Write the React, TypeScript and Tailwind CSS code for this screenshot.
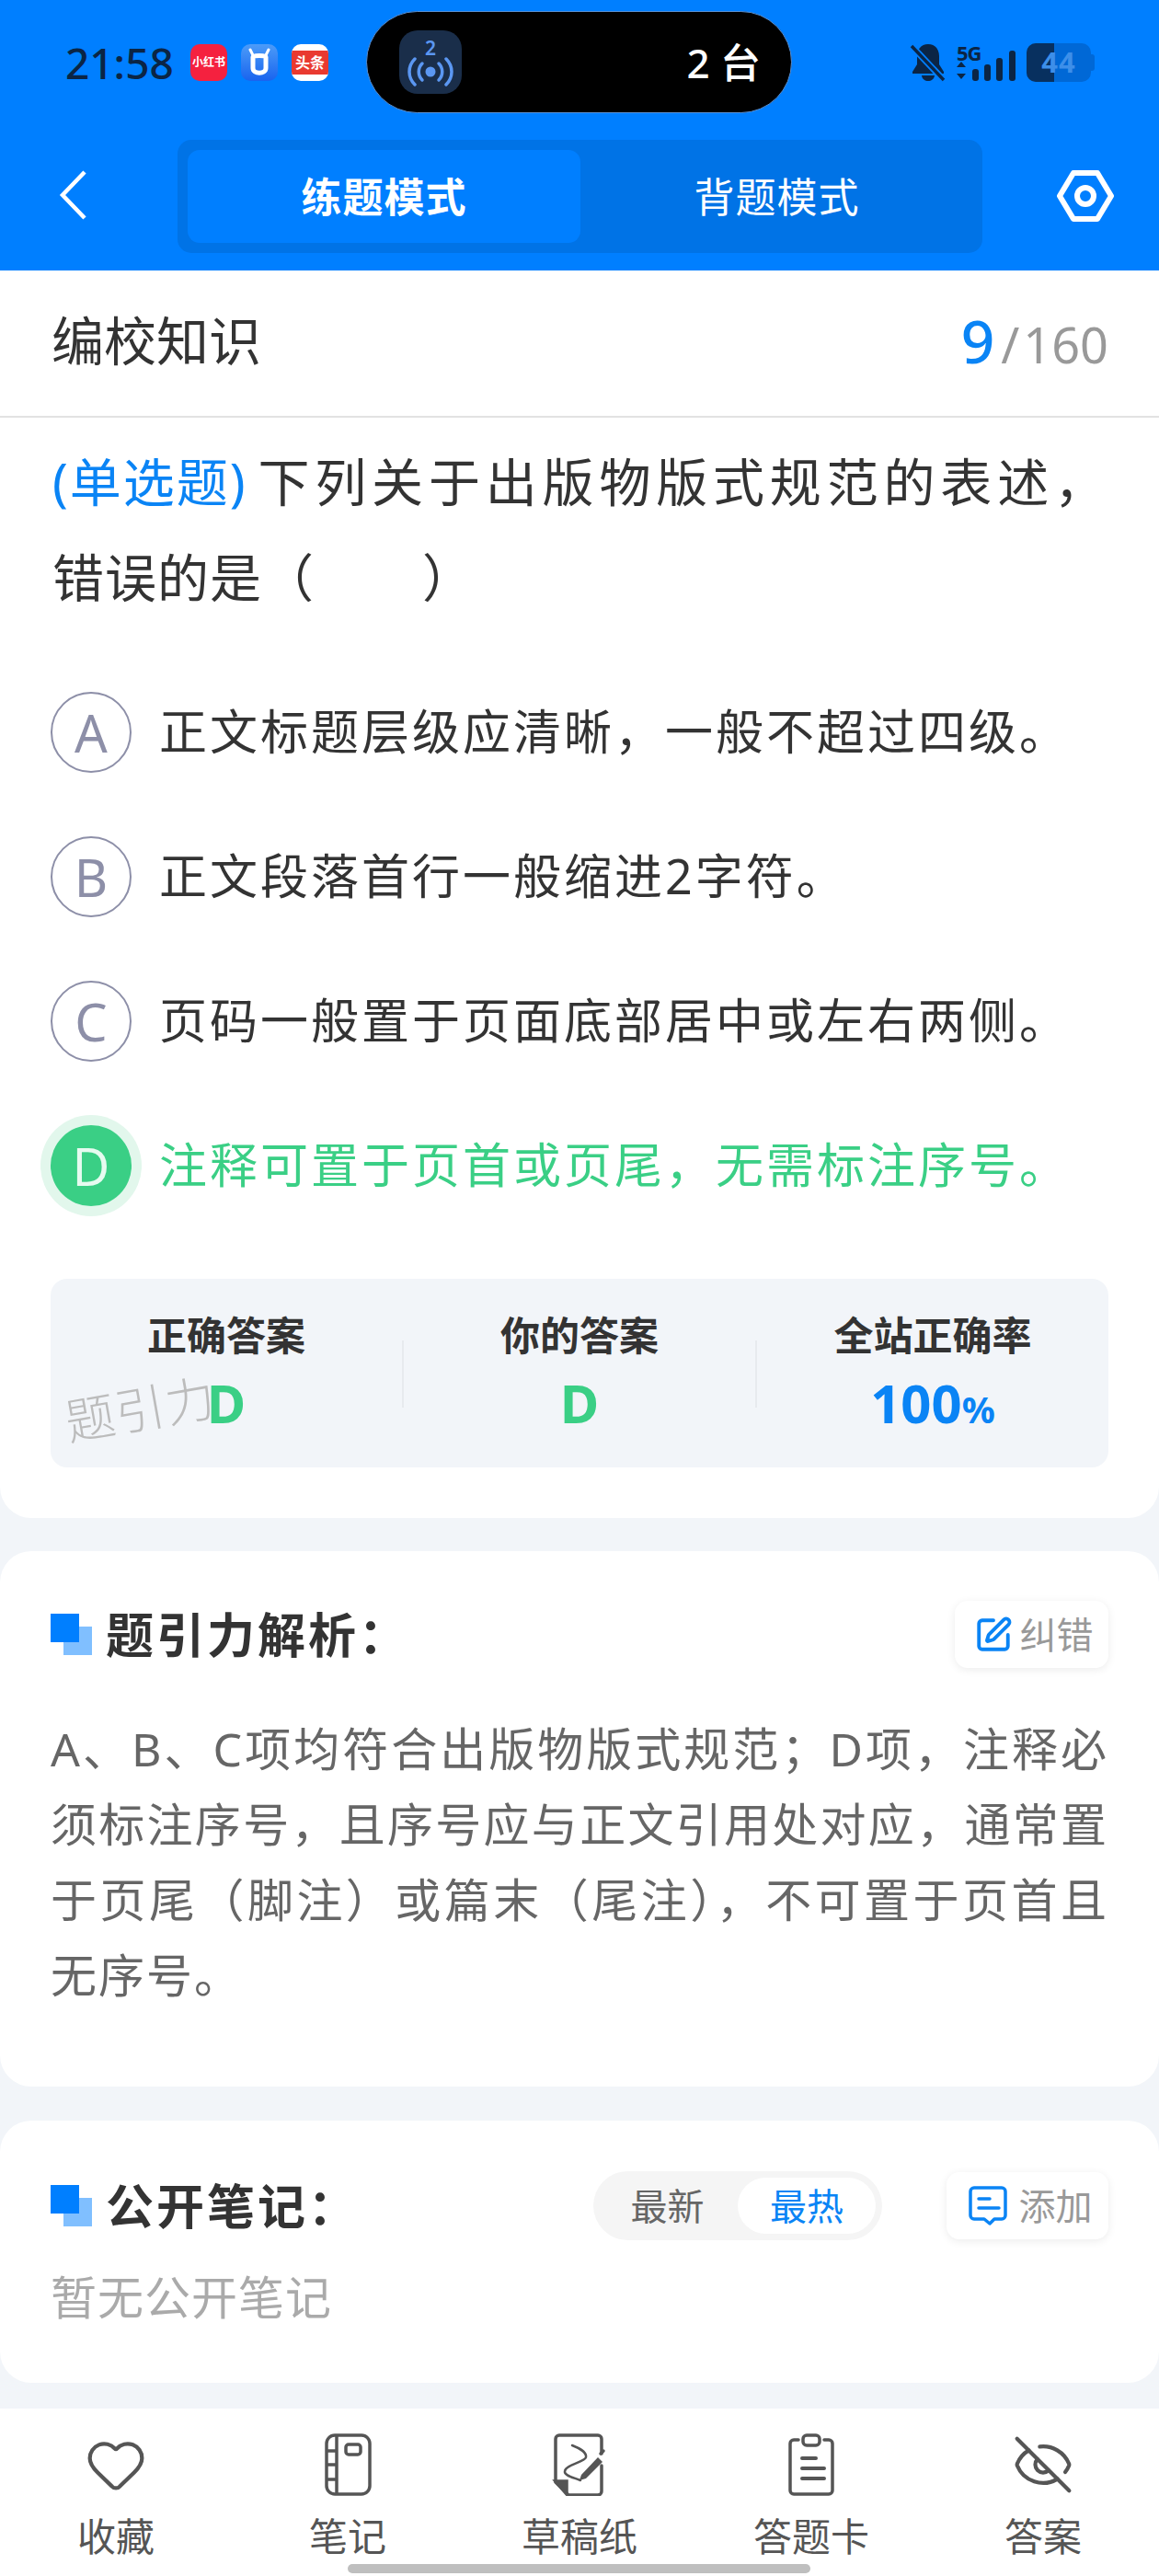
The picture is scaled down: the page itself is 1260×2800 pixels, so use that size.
import { Heart, SquarePen, EyeOff } from 'lucide-react';

const options = [
  { key: 'A', text: '正文标题层级应清晰，一般不超过四级。' },
  { key: 'B', text: '正文段落首行一般缩进2字符。' },
  { key: 'C', text: '页码一般置于页面底部居中或左右两侧。' },
];

function StatusBar() {
  return (
    <div className="relative flex h-[135px] items-center pl-[71px] pr-[70px]">
      <span className="w-[136px] text-[46px] leading-none font-medium text-[#0b2545]">21:58</span>
      <div className="flex h-[40px] w-[40px] items-center justify-center rounded-[10px] bg-[#f5213f] text-[12px] leading-none font-bold whitespace-nowrap text-white">
        小红书
      </div>
      <div className="ml-[15px] flex h-[40px] w-[40px] items-center justify-center rounded-[10px] bg-gradient-to-b from-[#4c9bf8] to-[#1a63ee]">
        <svg width="28" height="32" viewBox="0 0 28 32" fill="none">
          <path d="M7 10c0-2 14-2 14 0v12c0 7-14 7-14 0z" stroke="#fff" strokeWidth="5" />
          <path d="M4 2l3 6M24 2l-3 6" stroke="#fff" strokeWidth="3" strokeLinecap="round" />
        </svg>
      </div>
      <div className="ml-[15px] flex h-[40px] w-[40px] flex-col justify-center overflow-hidden rounded-[10px] bg-white">
        <div className="flex h-[26px] items-center justify-center bg-[#e93a30] text-[16px] leading-none font-bold whitespace-nowrap text-white">
          头条
        </div>
      </div>
      <div className="ml-[41px] flex h-[111px] w-[463px] items-center rounded-full border border-[#5a8fd0] bg-black pl-[35px] pr-[33px]">
        <div className="flex h-[69px] w-[68px] flex-col items-center justify-center rounded-[20px] bg-[#1a2e4a]">
          <span className="text-[21px] leading-[20px] font-semibold text-[#5b97f2]">2</span>
          <svg width="50" height="32" viewBox="0 0 50 32" fill="none" stroke="#5b97f2" strokeWidth="3.5" strokeLinecap="round">
            <circle cx="25" cy="16" r="5.5" fill="#5b97f2" stroke="none" />
            <path d="M16 7c-5 5-5 13 0 18M34 7c5 5 5 13 0 18" />
            <path d="M8 2c-8 8-8 20 0 28M42 2c8 8 8 20 0 28" />
          </svg>
        </div>
        <span className="ml-auto text-[44px] leading-none font-medium whitespace-nowrap text-white">2 台</span>
      </div>
      <div className="ml-auto flex items-center">
        <svg width="40" height="42" viewBox="0 0 40 42" fill="#0b2545">
          <path d="M20 1c8 0 12 6 12 13v9l5 8v2H3v-2l5-8v-9C8 7 12 1 20 1z" />
          <path d="M13 35h14c-1 8-13 8-14 0z" />
          <path d="M2 3l35 37" stroke="#007fff" strokeWidth="7" />
          <path d="M2 3l35 37" stroke="#0b2545" strokeWidth="3.5" />
        </svg>
        <div className="ml-[11px] flex flex-col">
          <span className="text-[22px] leading-[20px] font-bold tracking-[-1px] text-[#0b2545]">5G</span>
          <svg width="64" height="33" viewBox="0 0 64 33" fill="#0b2545" className="-mt-[12px]">
            <path d="M5 12l5 6H0zM5 31l5-6H0z" />
            <rect x="17" y="20" width="7" height="13" rx="3" />
            <rect x="30" y="15" width="7" height="18" rx="3" />
            <rect x="43" y="8" width="7" height="25" rx="3" />
            <rect x="57" y="0" width="7" height="33" rx="3" />
          </svg>
        </div>
        <div className="relative ml-[12px] flex h-[42px] w-[70px] overflow-hidden rounded-[10px] bg-[#0068d6]">
          <div className="h-full w-[30px] bg-[#08305f]" />
          <span className="absolute inset-0 flex items-center justify-center text-[31px] leading-none font-bold tracking-[1px] text-[#3d8fe9]">44</span>
        </div>
        <div className="h-[18px] w-[4px] rounded-r-[3px] bg-[#0068d6]" />
      </div>
    </div>
  );
}

function NavBar() {
  return (
    <div className="flex h-[159px] items-start pl-[64px] pt-[17px]">
      <svg width="30" height="54" viewBox="0 0 30 54" fill="none" stroke="#fff" strokeWidth="4.5" className="mt-[33px]">
        <path d="M28 2L4 27l24 25" />
      </svg>
      <div className="ml-[99px] flex h-[123px] w-[875px] rounded-[15px] bg-[#0073e6] p-[11px] pr-0">
        <div className="flex h-[101px] w-[427px] items-center justify-center rounded-[13px] bg-[#007fff] text-[44px] font-bold tracking-[1px] text-white">
          练题模式
        </div>
        <div className="flex w-[427px] items-center justify-center text-[44px] tracking-[1px] text-white">背题模式</div>
      </div>
      <svg width="62" height="56" viewBox="0 0 62 56" fill="none" stroke="#fff" className="ml-[81px] mt-[33px]">
        <path d="M18 3h26l15 25-15 25H18L3 28z" strokeWidth="6" strokeLinejoin="round" />
        <circle cx="31" cy="28" r="9" strokeWidth="6" />
      </svg>
    </div>
  );
}

function SectionMark() {
  return (
    <div className="relative h-[45px] w-[45px] shrink-0">
      <div className="absolute right-0 bottom-0 h-[31px] w-[31px] bg-[#80bfff]" />
      <div className="absolute top-0 left-0 h-[31px] w-[31px] bg-[#007fff]" />
    </div>
  );
}

function Stat({ label, children }: { label: string; children: React.ReactNode }) {
  return (
    <div className="flex flex-1 flex-col items-center pt-[40px]">
      <span className="text-[43px] leading-[44px] font-bold text-[#333]">{label}</span>
      <div className="mt-[21px] h-[60px] text-[58px] leading-[60px] font-bold">{children}</div>
    </div>
  );
}

function QuestionCard() {
  return (
    <div className="relative rounded-b-[34px] bg-white pb-[55px]">
      <div className="flex h-[158px] items-center justify-between pr-[55px] pb-[5px] pl-[56px]">
        <span className="text-[57px] leading-none text-[#333]">编校知识</span>
        <span className="flex items-baseline leading-none">
          <span className="text-[64px] font-medium text-[#0a84f5]">9</span>
          <span className="ml-[7px] text-[54px] text-[#999]">/</span>
          <span className="ml-[4px] text-[54px] text-[#999]">160</span>
        </span>
      </div>
      <div className="h-[2px] bg-[#e2e2e2]" />
      <div className="mt-[17px] px-[57px] text-[56px] leading-[104px] tracking-[1px] text-[#333]">
        <div className="text-justify [text-align-last:justify]">
          <span className="mr-[7px] inline-block tracking-[2px] text-[#0a84f5]">(单选题)</span>下列关于出版物版式规范的表述，
        </div>
        <div>错误的是（&emsp;&ensp;&thinsp;&thinsp;&thinsp;）</div>
      </div>
      <div className="mt-[73px] flex flex-col gap-[69px] pl-[55px]">
        {options.map((o) => (
          <div key={o.key} className="flex h-[88px] items-center">
            <div className="flex h-[88px] w-[88px] items-center justify-center rounded-full border-2 border-[#8d8fa8] text-[56px] text-[#8d8fa8]">
              {o.key}
            </div>
            <span className="ml-[30px] pb-[2px] text-[52px] tracking-[3px] text-[#333]">{o.text}</span>
          </div>
        ))}
        <div className="flex h-[88px] items-center">
          <div className="flex h-[88px] w-[88px] items-center justify-center rounded-full bg-[#3acf85] text-[56px] text-[#e6fbf0] shadow-[0_0_0_11px_#e2f7ec]">
            D
          </div>
          <span className="ml-[30px] pb-[2px] text-[52px] tracking-[3px] text-[#3acf85]">注释可置于页首或页尾，无需标注序号。</span>
        </div>
      </div>
      <div className="relative mx-[55px] mt-[79px] flex h-[205px] rounded-[18px] bg-[#f2f5f9]">
        <Stat label="正确答案">
          <span className="text-[#3acf85]">D</span>
        </Stat>
        <div className="mt-[67px] h-[73px] w-[2px] bg-[#e7eaee]" />
        <Stat label="你的答案">
          <span className="text-[#3acf85]">D</span>
        </Stat>
        <div className="mt-[67px] h-[73px] w-[2px] bg-[#e7eaee]" />
        <Stat label="全站正确率">
          <span className="text-[#0a84f5]">
            100<span className="text-[40px]">%</span>
          </span>
        </Stat>
        <span className="absolute top-[114px] left-[15px] -rotate-[10deg] text-[54px] leading-none font-light tracking-[1px] text-[#bcbcbc]">
          题引力
        </span>
      </div>
    </div>
  );
}

function AnalysisCard() {
  return (
    <div className="mt-[36px] rounded-[34px] bg-white px-[55px] pt-[54px] pb-[80px]">
      <div className="flex h-[73px] items-center">
        <SectionMark />
        <span className="ml-[15px] text-[52px] font-bold tracking-[3px] text-[#333]">题引力解析：</span>
        <div className="ml-auto flex h-[73px] w-[167px] items-center justify-center gap-[8px] rounded-[14px] bg-white pl-[4px] shadow-[0_2px_10px_rgba(0,0,0,0.08)]">
          <SquarePen size={42} strokeWidth={2.2} color="#0a84f5" />
          <span className="text-[40px] leading-none text-[#999]">纠错</span>
        </div>
      </div>
      <p className="mt-[47px] text-justify text-[50px] leading-[82px] tracking-[2px] text-[#666]">
        A、B、C项均符合出版物版式规范；D项，注释必须标注序号，且序号应与正文引用处对应，通常置于页尾（脚注）或篇末（尾注），不可置于页首且无序号。
      </p>
    </div>
  );
}

function NotesCard() {
  return (
    <div className="mt-[37px] h-[285px] rounded-[34px] bg-white px-[55px] pt-[55px]">
      <div className="flex h-[75px] items-center">
        <SectionMark />
        <span className="ml-[15px] text-[52px] font-bold tracking-[3px] text-[#333]">公开笔记：</span>
        <div className="ml-auto flex h-[75px] w-[314px] items-center rounded-full bg-[#f5f5f5] pr-[7px]">
          <span className="flex-1 pl-[4px] text-center text-[40px] text-[#666]">最新</span>
          <span className="flex h-[61px] w-[150px] items-center justify-center rounded-full bg-white text-[40px] text-[#0a84f5]">最热</span>
        </div>
        <div className="ml-[70px] flex h-[73px] w-[176px] items-center justify-center gap-[12px] rounded-[14px] bg-white pl-[5px] shadow-[0_2px_10px_rgba(0,0,0,0.08)]">
          <svg width="44" height="46" viewBox="0 0 44 46" fill="none" stroke="#0a84f5" strokeWidth="3.5" strokeLinecap="round" strokeLinejoin="round">
            <path d="M7 3h30a4 4 0 0 1 4 4v26a4 4 0 0 1-4 4h-8l-5 5-6-5H7a4 4 0 0 1-4-4V7a4 4 0 0 1 4-4z" />
            <path d="M12 15h12M12 25h22" />
          </svg>
          <span className="text-[40px] leading-none text-[#999]">添加</span>
        </div>
      </div>
      <p className="mt-[27px] text-[50px] leading-[70px] tracking-[1px] text-[#aaa]">暂无公开笔记</p>
    </div>
  );
}

function BottomBar() {
  const iconClass = 'h-[68px] w-[68px]';
  const items = [
    { label: '收藏', icon: <Heart className={iconClass} strokeWidth={1.5} color="#555" /> },
    {
      label: '笔记',
      icon: (
        <svg viewBox="0 0 68 68" fill="none" stroke="#555" strokeWidth="3.5" className={iconClass}>
          <rect x="11" y="2" width="47" height="64" rx="9" />
          <path d="M22 2v64M11 19h11M11 34h11M11 50h11" />
          <rect x="32" y="12" width="16" height="11" rx="3" />
        </svg>
      ),
    },
    {
      label: '草稿纸',
      icon: (
        <svg viewBox="0 0 68 68" fill="none" stroke="#555" strokeWidth="3.5" strokeLinecap="round" className={iconClass}>
          <path d="M58 22V6a4 4 0 0 0-4-4H12a4 4 0 0 0-4 4v47l14 14h32a4 4 0 0 0 4-4V35" />
          <path d="M8 52h12v14z" fill="#555" />
          <path d="M26 13c8 3 16 8 15 13-1 5-22 8-23 15-1 5 10 7 17 10" strokeWidth="2.5" />
          <path d="M36 45l18-19 5 5-18 18-7 2z" fill="#555" stroke="none" />
          <path d="M57 22l3-3" />
        </svg>
      ),
    },
    {
      label: '答题卡',
      icon: (
        <svg viewBox="0 0 68 68" fill="none" stroke="#555" strokeWidth="3.5" strokeLinecap="round" className={iconClass}>
          <path d="M20 7h-5a4 4 0 0 0-4 4v51a4 4 0 0 0 4 4h38a4 4 0 0 0 4-4V11a4 4 0 0 0-4-4h-5" />
          <rect x="25" y="2" width="18" height="11" rx="4" />
          <path d="M24 27h15M24 38h24M24 49h24" strokeWidth="4" />
        </svg>
      ),
    },
    { label: '答案', icon: <EyeOff className={iconClass} strokeWidth={1.5} color="#555" /> },
  ];
  return (
    <div className="mt-[28px] flex h-[182px] bg-white pt-[27px]">
      {items.map((item) => (
        <div key={item.label} className="flex flex-1 flex-col items-center">
          {item.icon}
          <span className="mt-[14px] text-[42px] leading-[60px] text-[#555]">{item.label}</span>
        </div>
      ))}
    </div>
  );
}

export default function App() {
  return (
    <div className="relative h-[2800px] w-[1260px] overflow-hidden bg-[#f2f5f9] font-['Noto_Sans','Noto_Sans_CJK_SC',sans-serif]">
      <div className="bg-[#007fff]">
        <StatusBar />
        <NavBar />
      </div>
      <QuestionCard />
      <AnalysisCard />
      <NotesCard />
      <BottomBar />
      <div className="absolute top-[2787px] left-[378px] h-[10px] w-[503px] rounded-full bg-[#bfbfbf]" />
    </div>
  );
}
